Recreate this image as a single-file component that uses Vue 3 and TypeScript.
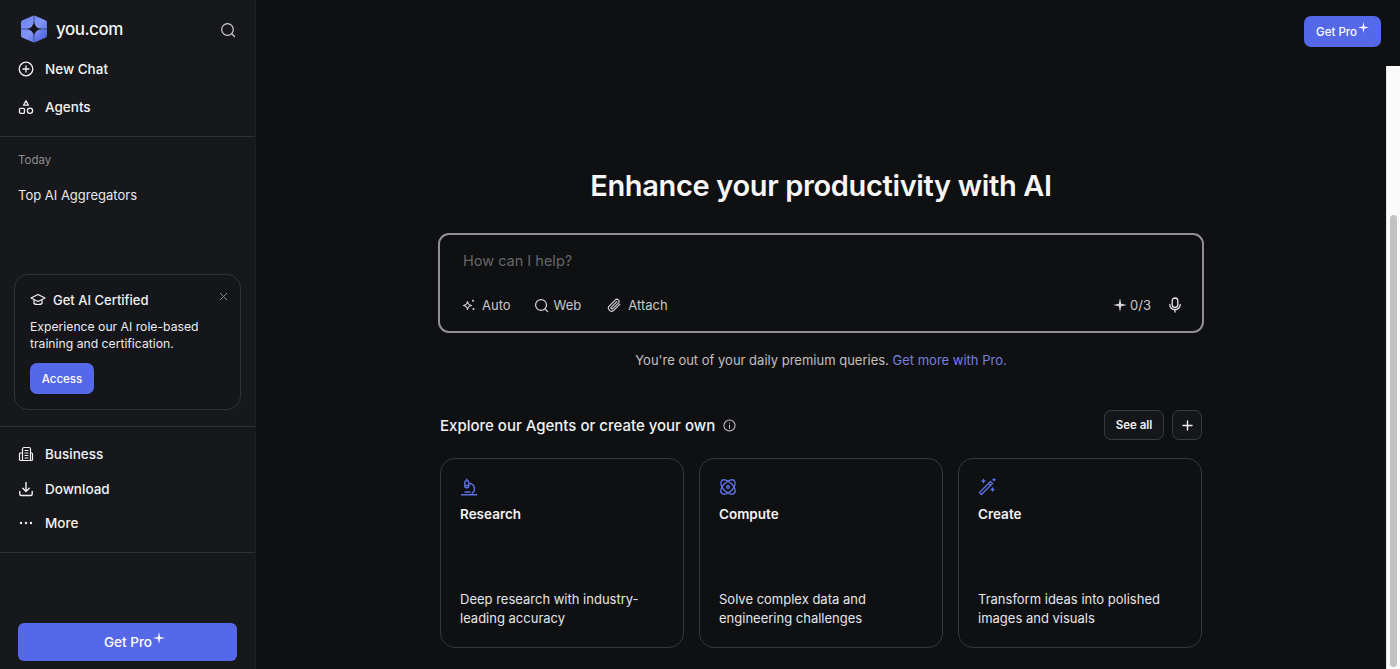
<script setup lang="ts">
const sparkPath = 'M6 0L7 5 12 6 7 7 6 12 5 7 0 6 5 5Z'
const topNav = [
  { label: 'New Chat', icon: 'plus' },
  { label: 'Agents', icon: 'shapes' },
]
const bottomNav = [
  { label: 'Business', icon: 'building' },
  { label: 'Download', icon: 'download' },
  { label: 'More', icon: 'dots' },
]
const cards = [
  { title: 'Research', desc: 'Deep research with industry-leading accuracy', icon: 'scope' },
  { title: 'Compute', desc: 'Solve complex data and engineering challenges', icon: 'atom' },
  { title: 'Create', desc: 'Transform ideas into polished images and visuals', icon: 'wand' },
]
</script>

<template>
  <div class="page">
    <aside class="sidebar">
      <div class="brand">
        <svg class="logo" width="28" height="28" viewBox="0 0 28 28">
          <defs>
            <linearGradient id="logo-fill" x1="0" y1="0" x2="1" y2="1">
              <stop offset="0" stop-color="#6f85f2" />
              <stop offset="0.5" stop-color="#8196f6" />
              <stop offset="1" stop-color="#4c62da" />
            </linearGradient>
          </defs>
          <path d="M14 3L24.500 7.500V20.500L14 25 3.500 20.500V7.500Z" fill="url(#logo-fill)" stroke="url(#logo-fill)" stroke-width="5" stroke-linejoin="round" />
          <path d="M14 0v8M14 20v8M0 14h8M20 14h8" stroke="#17181b" stroke-width="1" opacity="0.5" />
          <path d="M14 6.500Q14.800 13.200 21.500 14 14.800 14.800 14 21.500 13.200 14.800 6.500 14 13.200 13.200 14 6.500Z" fill="#14151a" />
        </svg>
        <span class="brand-name">you.com</span>
        <svg class="brand-search" width="16" height="16" viewBox="0 0 16 16" fill="none" stroke="#d0d0d2" stroke-width="1.200" stroke-linecap="round">
          <circle cx="7.500" cy="7.500" r="5.800" />
          <path d="M12 12l2.500 2.500" />
        </svg>
      </div>

      <nav class="nav nav-top">
        <a v-for="item in topNav" :key="item.label" class="nav-item">
          <svg width="16" height="16" viewBox="0 0 16 16" fill="none" stroke="#f2f2f2" stroke-width="1.300" stroke-linecap="round">
            <template v-if="item.icon === 'plus'">
              <circle cx="8" cy="8" r="6.800" />
              <path d="M8 5v6M5 8h6" />
            </template>
            <template v-else>
              <path d="M8 1.800l2.500 4.400h-5z" stroke-linejoin="round" />
              <rect x="1.500" y="9.300" width="5" height="5" rx="1" />
              <circle cx="12" cy="11.800" r="2.600" />
            </template>
          </svg>
          <span>{{ item.label }}</span>
        </a>
      </nav>

      <section class="history">
        <div class="history-label">Today</div>
        <div class="history-item">Top AI Aggregators</div>
      </section>

      <div class="promo">
        <div class="promo-head">
          <svg width="16" height="14" viewBox="0 0 16 14" fill="none" stroke="#f2f2f2" stroke-width="1.200" stroke-linejoin="round">
            <path d="M8 1.500L15 5 8 8.500 1 5z" />
            <path d="M4 7v3.500c1.200 1.300 6.800 1.300 8 0V7" />
          </svg>
          <span>Get AI Certified</span>
          <svg class="promo-close" width="9" height="9" viewBox="0 0 9 9" fill="none" stroke="#8b8b8f" stroke-width="1">
            <path d="M1 1l7 7M8 1l-7 7" />
          </svg>
        </div>
        <p class="promo-text">Experience our AI role-based training and certification.</p>
        <button class="promo-btn">Access</button>
      </div>

      <nav class="nav nav-bottom">
        <a v-for="item in bottomNav" :key="item.label" class="nav-item">
          <svg width="16" height="16" viewBox="0 0 16 16" fill="none" stroke="#f2f2f2" stroke-width="1.200" stroke-linecap="round" stroke-linejoin="round">
            <template v-if="item.icon === 'building'">
              <path d="M4.500 14.500V3q0-1.500 1.500-1.500h5q1.500 0 1.500 1.500v11.500z" />
              <path d="M4.500 7H2.500q-1 0-1 1v5.500q0 1 1 1h2M12.500 7h1q1 0 1 1v5.500q0 1-1 1h-1" />
              <path d="M7 4.500h3M7 7h3M7 9.500h3M7 12h3" />
            </template>
            <template v-else-if="item.icon === 'download'">
              <path d="M8 1.500v8.500M4.800 7.200L8 10.400l3.200-3.200" stroke-width="1.400" />
              <path d="M1.800 10.500v2.500q0 1.500 1.500 1.500h9.400q1.500 0 1.500-1.500v-2.500" stroke-width="1.400" />
            </template>
            <template v-else>
              <circle cx="3" cy="8" r="1.200" fill="#f2f2f2" stroke="none" />
              <circle cx="8" cy="8" r="1.200" fill="#f2f2f2" stroke="none" />
              <circle cx="13" cy="8" r="1.200" fill="#f2f2f2" stroke="none" />
            </template>
          </svg>
          <span>{{ item.label }}</span>
        </a>
      </nav>

      <div class="side-foot">
        <button class="pro-btn pro-wide">
          Get Pro<svg class="spark" width="12" height="12" viewBox="0 0 12 12"><path :d="sparkPath" fill="#fff" /></svg>
        </button>
      </div>
    </aside>

    <main class="main">
      <header class="main-top">
        <button class="pro-btn pro-small">
          Get Pro<svg class="spark" width="11" height="11" viewBox="0 0 12 12"><path :d="sparkPath" fill="#fff" /></svg>
        </button>
      </header>

      <div class="content">
        <h1>Enhance your productivity with AI</h1>

        <div class="composer">
          <div class="placeholder">How can I help?</div>
          <div class="composer-row">
            <span class="tool">
              <svg width="14" height="14" viewBox="0 0 14 14" fill="none" stroke="#d6d6d8" stroke-width="1.200" stroke-linejoin="round">
                <path d="M5.500 3.500Q6 7 9.500 7.500 6 8 5.500 11.500 5 8 1.500 7.500 5 7 5.500 3.500Z" />
                <circle cx="11" cy="2.800" r="1" fill="#d6d6d8" stroke="none" />
                <circle cx="11.500" cy="11" r="1" fill="#d6d6d8" stroke="none" />
              </svg>
              Auto
            </span>
            <span class="tool tool-web">
              <svg width="15" height="15" viewBox="0 0 16 16" fill="none" stroke="#d6d6d8" stroke-width="1.300" stroke-linecap="round">
                <circle cx="7.500" cy="7.500" r="5.800" />
                <path d="M12 12l2.500 2.500" />
              </svg>
              Web
            </span>
            <span class="tool">
              <svg width="15" height="15" viewBox="0 0 16 16" fill="none" stroke="#d6d6d8" stroke-width="1.200" stroke-linecap="round">
                <path d="M13.800 6.500L7.500 13a3.400 3.400 0 0 1-5-4.700L9 1.900a2.300 2.300 0 0 1 3.300 3.200L6.200 11.300a1.100 1.100 0 0 1-1.600-1.600L10.500 3.800" />
              </svg>
              Attach
            </span>
            <span class="quota">
              <svg width="14" height="14" viewBox="0 0 12 12"><path :d="sparkPath" fill="#d6d6d8" /></svg>
              0/3
            </span>
            <svg class="mic" width="14" height="16" viewBox="0 0 14 16" fill="none" stroke="#e4e4e6" stroke-width="1.300" stroke-linecap="round">
              <rect x="4.200" y="1" width="5.600" height="9.500" rx="2.800" />
              <path d="M1.800 7.500a5.200 5.200 0 0 0 10.400 0M7 12.700V15" />
            </svg>
          </div>
        </div>

        <p class="limit">You're out of your daily premium queries. <a class="limit-link">Get more with Pro.</a></p>

        <div class="agents-head">
          <h2>Explore our Agents or create your own</h2>
          <svg width="13" height="13" viewBox="0 0 14 14" fill="none" stroke="#c8c8ca" stroke-width="1.100" stroke-linecap="round">
            <circle cx="7" cy="7" r="6" />
            <path d="M7 6.500V10M7 4.200v.1" />
          </svg>
          <button class="ghost-btn see-all">See all</button>
          <button class="ghost-btn add">
            <svg width="11" height="11" viewBox="0 0 11 11" fill="none" stroke="#f2f2f2" stroke-width="1.400" stroke-linecap="round">
              <path d="M5.500 1v9M1 5.500h9" />
            </svg>
          </button>
        </div>

        <div class="cards">
          <article v-for="card in cards" :key="card.title" class="card">
            <svg class="card-icon" width="18" height="18" viewBox="0 0 18 18" fill="none" stroke="#5b71e6" stroke-width="1.400" stroke-linecap="round" stroke-linejoin="round">
              <template v-if="card.icon === 'scope'">
                <rect x="4.800" y="2.800" width="4" height="7" rx="1.500" />
                <path d="M6.800 1v1.800M4.800 7.500h4M9.500 5.500a5 5 0 0 1 5 5q0 3.500-2.500 5M1.500 16.800h15M5 14h5" />
              </template>
              <template v-else-if="card.icon === 'atom'">
                <ellipse cx="9" cy="9" rx="9" ry="4.800" transform="rotate(45 9 9)" />
                <ellipse cx="9" cy="9" rx="9" ry="4.800" transform="rotate(-45 9 9)" />
                <circle cx="9" cy="9" r="1.300" />
              </template>
              <template v-else>
                <path d="M1.500 14.500L12.500 3.500l2 2-11 11zM10.500 5.500l2 2" />
                <path d="M5.500 1.500v3M4 3h3M14.500 10v3M13 11.500h3M16 .8v2M15 1.800h2" />
              </template>
            </svg>
            <h3>{{ card.title }}</h3>
            <p>{{ card.desc }}</p>
          </article>
        </div>
      </div>
    </main>

    <div class="scrollbar"><div class="scroll-thumb"></div></div>
  </div>
</template>

<style>
html,
body {
  margin: 0;
  height: 100%;
  overflow: hidden;
  background: #0f1012;
}
</style>

<style scoped>
.page {
  display: flex;
  height: 669px;
  width: 1400px;
  overflow: hidden;
  position: relative;
  background: #0f1012;
  color: #f2f2f2;
  font-family: Inter, "Liberation Sans", sans-serif;
}

/* --- SIDEBAR --- */
.sidebar {
  width: 256px;
  flex: none;
  box-sizing: border-box;
  display: flex;
  flex-direction: column;
  background: #17181b;
  border-right: 1px solid #1d1e22;
}

.brand {
  display: flex;
  align-items: center;
  height: 26px;
  padding: 16px 19px 0 20px;
}

.brand-name {
  margin-left: 8px;
  font-size: 17px;
  font-weight: 500;
  letter-spacing: -0.5px;
  color: #f4f4f4;
}

.brand-search {
  margin-left: auto;
  position: relative;
  top: 1px;
}

.nav {
  display: flex;
  flex-direction: column;
}

.nav-item {
  display: flex;
  align-items: center;
  gap: 11px;
  padding-left: 18px;
  font-size: 13.500px;
  font-weight: 500;
  color: #f4f4f4;
}

.nav-top {
  padding-top: 18px;
  height: 95px;
  box-sizing: border-box;
  gap: 20px;
  border-bottom: 1px solid #303136;
}

.nav-top .nav-item {
  height: 18px;
}

.history {
  height: 137px;
  box-sizing: border-box;
  padding: 16px 18px 0;
}

.history-label {
  font-size: 11.500px;
  color: #8e8e92;
  line-height: 14px;
}

.history-item {
  margin-top: 19px;
  font-size: 13px;
  line-height: 18px;
  color: #e8e8ea;
}

.promo {
  margin: 0 14px;
  height: 136px;
  box-sizing: border-box;
  padding: 16px 15px 0;
  border: 1px solid #303136;
  border-radius: 14px;
  background: #15161a;
}

.promo-head {
  display: flex;
  align-items: center;
  gap: 7px;
  font-size: 13px;
  font-weight: 500;
  line-height: 18px;
}

.promo-close {
  margin-left: auto;
  margin-right: -3px;
  position: relative;
  top: -4px;
}

.promo-text {
  margin: 9px 0 0;
  font-size: 12.200px;
  line-height: 17px;
  color: #ececee;
}

.promo-btn {
  display: block;
  margin-top: 11px;
  width: 64px;
  height: 31px;
  border: none;
  border-radius: 7px;
  background: #5468e8;
  color: #fff;
  font: 500 11.500px Inter, "Liberation Sans", sans-serif;
}

.nav-bottom {
  margin-top: 16px;
  padding-top: 18px;
  height: 127px;
  box-sizing: border-box;
  gap: 16.500px;
  border-top: 1px solid #303136;
  border-bottom: 1px solid #303136;
}

.nav-bottom .nav-item {
  height: 18px;
}

.side-foot {
  padding: 70px 18px 0 18px;
}

.pro-btn {
  border: none;
  background: #5468e8;
  color: #fff;
  font-family: Inter, "Liberation Sans", sans-serif;
  font-weight: 500;
  display: flex;
  align-items: center;
  justify-content: center;
}

.spark {
  position: relative;
  top: -4px;
  margin-left: 1px;
}

.pro-wide {
  width: 100%;
  height: 38px;
  border-radius: 6px;
  font-size: 13.500px;
  padding-left: 20px;
}

/* --- MAIN --- */
.main {
  flex: 1;
  min-width: 0;
  display: flex;
  flex-direction: column;
}

.main-top {
  display: flex;
  justify-content: flex-end;
  padding: 16px 19px 0 0;
  height: 46px;
  box-sizing: border-box;
}

.pro-small {
  width: 77px;
  height: 31px;
  border-radius: 7px;
  font-size: 11.500px;
}

.content {
  width: 766px;
  margin-left: 182px;
}

h1 {
  margin: 122px 0 0;
  text-align: center;
  font-size: 29px;
  line-height: 36px;
  font-weight: 600;
  letter-spacing: -0.35px;
  color: #f6f6f6;
}

.composer {
  margin-top: 29px;
  height: 100px;
  box-sizing: border-box;
  border: 2px solid #8f8f91;
  border-radius: 11px;
  padding: 16px 20px 0 22px;
  display: flex;
  flex-direction: column;
}

.placeholder {
  font-size: 14.500px;
  line-height: 20px;
  color: #66666a;
  padding-left: 1px;
}

.composer-row {
  margin-top: 25px;
  display: flex;
  align-items: center;
  font-size: 13px;
  color: #c9c9cc;
  height: 18px;
}

.tool {
  display: flex;
  align-items: center;
  gap: 6px;
  margin-right: 24px;
}

.tool-web {
  gap: 5px;
  margin-left: -1px;
  margin-right: 26px;
}

.quota {
  margin-left: auto;
  display: flex;
  align-items: center;
  gap: 3px;
  margin-right: 17px;
}

.limit {
  margin: 17px 0 0;
  height: 20px;
  text-align: center;
  font-size: 13px;
  line-height: 20px;
  color: #c0c0c3;
}

.limit-link {
  color: #7380e0;
}

.agents-head {
  margin-top: 40px;
  display: flex;
  align-items: center;
  height: 30px;
  padding: 0 2px;
}

h2 {
  margin: 0 8px 0 0;
  font-size: 15px;
  font-weight: 500;
  color: #f2f2f2;
}

.ghost-btn {
  height: 30px;
  box-sizing: border-box;
  background: #15161a;
  border: 1px solid #3a3b40;
  border-radius: 7px;
  color: #f2f2f2;
  font: 600 11.500px Inter, "Liberation Sans", sans-serif;
  display: flex;
  align-items: center;
  justify-content: center;
}

.see-all {
  margin-left: auto;
  width: 60px;
}

.add {
  margin-left: 8px;
  width: 30px;
}

.cards {
  margin-top: 18px;
  padding: 0 2px;
  display: grid;
  grid-template-columns: repeat(3, 244px);
  justify-content: space-between;
}

.card {
  height: 190px;
  box-sizing: border-box;
  border: 1px solid #36373b;
  border-radius: 15px;
  padding: 19px 19px 0;
  display: flex;
  flex-direction: column;
}

.card-icon {
  overflow: visible;
}

h3 {
  margin: 9px 0 0;
  font-size: 13.500px;
  line-height: 18px;
  font-weight: 600;
  color: #f4f4f4;
}

.card p {
  margin: auto 0 19px;
  font-size: 13px;
  line-height: 19px;
  color: #e6e6e8;
}

/* --- SCROLLBAR --- */
.scrollbar {
  position: absolute;
  right: 0;
  top: 66px;
  bottom: 0;
  width: 14px;
  background: #fafafa;
  border-left: 1px solid #e6e6e6;
  box-sizing: border-box;
}

.scroll-thumb {
  position: absolute;
  left: 3px;
  right: 3px;
  top: 149px;
  bottom: 2px;
  border-radius: 4px;
  background: #c2c2c2;
}
</style>
